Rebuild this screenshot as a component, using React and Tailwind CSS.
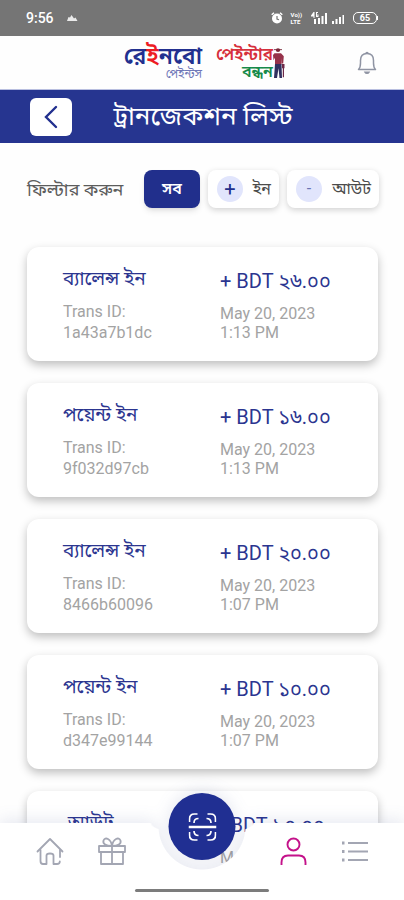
import React, { useState } from 'react';

const transactions = [
  { id: '1a43a7b1dc', title: 'ব্যালেন্স ইন', amount: '+ BDT ২৬.০০', date: 'May 20, 2023', time: '1:13 PM' },
  { id: '9f032d97cb', title: 'পয়েন্ট ইন', amount: '+ BDT ১৬.০০', date: 'May 20, 2023', time: '1:13 PM' },
  { id: '8466b60096', title: 'ব্যালেন্স ইন', amount: '+ BDT ২০.০০', date: 'May 20, 2023', time: '1:07 PM' },
  { id: 'd347e99144', title: 'পয়েন্ট ইন', amount: '+ BDT ১০.০০', date: 'May 20, 2023', time: '1:07 PM' },
  { id: '', title: '\u00a0আউট', amount: '- BDT ১০.০০', date: 'May 20, 2023', time: '' },
];

const StatusBar = () => (
  <div className="flex h-9 shrink-0 items-center justify-between bg-[#757575] pr-[26px] pl-[26px] text-white">
    <div className="flex items-center gap-3">
      <span className="text-[14px] font-medium">9:56</span>
      <svg className="h-2 w-3" viewBox="0 0 12 8" fill="currentColor">
        <path d="M1 7h10.500L9.500 3.500 8 4.500 5.500 1 4 3.500 2.500 3z" opacity=".85" />
      </svg>
    </div>
    <div className="flex items-center gap-2">
      <svg className="h-3 w-3" viewBox="0 0 12 12">
        <circle cx="6" cy="6.500" r="5" fill="#fff" />
        <path d="M.7 2.800L3 .8M11.300 2.800L9 .8" stroke="#fff" strokeWidth="1.500" />
        <path d="M6 4v3l2 .8" stroke="#757575" strokeWidth="1.200" fill="none" />
      </svg>
      <div className="flex flex-col text-[6px] leading-[7px] font-bold">
        <span>Vo))</span>
        <span>LTE</span>
      </div>
      <svg className="h-3 w-[35px]" viewBox="0 0 35 12" fill="#fff">
        <path d="M3.500 0L1 3.500v1h2.500V6h1V0zM8 0H6v5h2.500V2.500H7.200v1h.4V4H7V1h1z" />
        <path d="M4 7h2v5H4zM8 6h2v6H8zM11.500 4h2v8h-2zM15 1h2v11h-2zM22 9h2v3h-2zM25.500 7h2v5h-2zM29 5h2v7h-2zM32.500 3h1.500v9h-1.500z" />
      </svg>
      <div className="flex items-center">
        <span className="flex h-3 w-6 items-center justify-center rounded-[5px] border border-white text-[9px] leading-none font-bold">65</span>
        <span className="h-1 w-px bg-white" />
      </div>
    </div>
  </div>
);

const PainterFigure = () => (
  <svg className="h-8 w-3" viewBox="0 0 12 36" preserveAspectRatio="none">
    <circle cx="5" cy="3.500" r="2.200" fill="#7a2a3a" />
    <path d="M1 2.500h8v1H1z" fill="#7a2a3a" />
    <path d="M1.500 7h6.500l2.800 3.500-.6 8H8.800l-.3-6V20H2V12L.5 15 0 9z" fill="#96324a" />
    <path d="M2 19h6.500l.5 16H6.500L5.500 24 4 35H1z" fill="#31305f" />
    <path d="M9 19h2.500v5H11v10H9.800V24H9z" fill="#6d2948" />
  </svg>
);

const Header = () => (
  <header className="flex h-[54px] shrink-0 items-center border-b border-[#b9bfe0] px-[25px]">
    <div className="w-[97px]" />
    <div className="flex flex-1 items-center gap-[14px]">
      <div className="flex w-20 flex-col items-end">
        <span className="text-[23px] leading-[23px] font-semibold whitespace-nowrap text-[#22308f]">
          রে<span className="text-[#ed1c24]">ই</span>নবো
        </span>
        <span className="text-[12px] leading-[13px] text-[#6f78b8]">পেইন্টস</span>
      </div>
      <div className="flex items-center">
        <div className="flex flex-col items-end">
          <span className="text-[17px] leading-[18px] font-semibold whitespace-nowrap text-[#d6303c]">পেইন্টার</span>
          <span className="text-[16px] leading-[17px] font-semibold text-[#168a4a]">বন্ধন</span>
        </div>
        <PainterFigure />
      </div>
    </div>
    <button type="button" aria-label="Notifications" className="text-[#8f94a3]">
      <svg className="h-6 w-6" viewBox="0 0 24 24" fill="none" stroke="currentColor" strokeWidth="1.500">
        <path d="M3.500 18.500c1.700-1.600 2-3.300 2-6.500V9.500C5.500 5.500 7.500 2.500 12 2.500s6.500 3 6.500 7V12c0 3.200.3 4.900 2 6.500z" strokeLinejoin="round" />
        <path d="M11 2.500c0-1.300 2-1.300 2 0" />
        <path d="M10 21.200c.8 1.500 3.200 1.500 4 0z" fill="currentColor" />
      </svg>
    </button>
  </header>
);

const TitleBar = () => (
  <div className="flex h-[53px] shrink-0 items-center bg-[#263590] px-[30px]">
    <button type="button" aria-label="Back" className="flex h-[38px] w-[42px] items-center justify-center rounded-md bg-white text-[#22308f]">
      <svg className="h-6 w-4" viewBox="0 0 16 24" fill="none" stroke="currentColor" strokeWidth="2.400">
        <path d="M13 2L3 12l10 10" strokeLinecap="round" />
      </svg>
    </button>
    <h1 className="flex-1 text-center text-[26px] whitespace-nowrap text-white">ট্রানজেকশন লিস্ট</h1>
    <div className="w-[40px]" />
  </div>
);

const Filters = () => {
  const [active, setActive] = useState('all');

  return (
    <div className="flex items-center pr-[25px] pl-[27px] pt-[27px]">
      <span className="flex-1 text-[18px] whitespace-nowrap text-[#5c5c5c]">ফিল্টার করুন</span>
      <div className="flex gap-2">
        <button
          type="button"
          aria-pressed={active === 'all'}
          onClick={() => setActive('all')}
          className="h-[38px] w-[56px] rounded-lg bg-[#212f8c] text-[16px] font-semibold text-white shadow-md"
        >
          সব
        </button>
        <button
          type="button"
          aria-pressed={active === 'in'}
          onClick={() => setActive('in')}
          className="flex h-[38px] w-[71px] items-center justify-between rounded-lg bg-white pr-2 pl-[9px] text-[16px] text-[#4b4b4b] shadow-[0_2px_6px_rgba(0,0,0,0.18)]"
        >
          <span className="flex h-[26px] w-[26px] items-center justify-center rounded-full bg-[#e1e5fc] text-[20px] leading-none text-[#212f8c]">+</span>
          ইন
        </button>
        <button
          type="button"
          aria-pressed={active === 'out'}
          onClick={() => setActive('out')}
          className="flex h-[38px] w-[92px] items-center justify-between rounded-lg bg-white pr-2 pl-[9px] text-[16px] text-[#4b4b4b] shadow-[0_2px_6px_rgba(0,0,0,0.18)]"
        >
          <span className="flex h-[26px] w-[26px] items-center justify-center rounded-full bg-[#e1e5fc] text-[16px] leading-none text-[#6a74b4]">-</span>
          আউট
        </button>
      </div>
    </div>
  );
};

const TransactionCard = ({ item }) => (
  <li className="grid h-[114px] shrink-0 grid-cols-[157px_1fr] rounded-xl bg-white pt-5 pl-9 shadow-[0_4px_10px_rgba(0,0,0,0.25)]">
    <div>
      <h2 className="text-[19px] leading-6 whitespace-nowrap text-[#2b3590]">{item.title}</h2>
      <p className="mt-[10px] text-[16px] leading-[21px] text-[#a3a3a3]">
        Trans ID:
        <br />
        {item.id}
      </p>
    </div>
    <div>
      <p className="pt-[2px] text-[20px] leading-6 whitespace-nowrap text-[#2b3590]">{item.amount}</p>
      <p className="mt-[11px] text-[16px] leading-[19px] text-[#a3a3a3]">
        {item.date}
        <br />
        {item.time}
      </p>
    </div>
  </li>
);

const BottomNav = () => (
  <nav className="absolute inset-x-0 bottom-0 h-[77px] drop-shadow-[0_-3px_8px_rgba(60,70,140,0.12)]">
    {/* white bar with the round cut-out under the scan button, flared at the top edge */}
    <div className="flex h-full flex-col bg-white [mask-composite:intersect] [mask-image:radial-gradient(circle_at_50%_3px,transparent_43px,black_44px),radial-gradient(52px_12px_at_50%_0,transparent_96%,black_100%)]">
      <div className="grid flex-1 grid-cols-[100px_24px_1fr_124px] px-0 pt-[14px] text-[#a3a6b3]">
        <a href="#home" aria-label="Home" className="flex justify-center">
          <svg className="h-7 w-7" viewBox="0 0 28 28" fill="none" stroke="currentColor" strokeWidth="1.800" strokeLinecap="round" strokeLinejoin="round">
            <path d="M1.500 14.500L14 2l12.500 12.500" />
            <path d="M4.500 13v11c0 2 .8 3 2.500 3h3.500v-8.500c0-1.500.8-2 3.500-2s3.500.5 3.500 2V27H21c1.500 0 2.800-.8 2.800-2.500M24 13v7" />
          </svg>
        </a>
        <a href="#gifts" aria-label="Gifts" className="flex justify-center">
          <svg className="h-7 w-7 shrink-0" viewBox="0 0 28 28" fill="none" stroke="currentColor" strokeWidth="1.800" strokeLinejoin="round">
            <path d="M1 9h26v6H1zM3 15h22v12H3zM14 9v18" />
            <path d="M14 9C8 9 4.500 7 5.500 3.500 7-.5 13 1.500 14 9zM14 9c6 0 9.500-2 8.500-5.500C21-.5 15 1.500 14 9z" />
          </svg>
        </a>
        <span />
        <div className="flex items-start gap-[33px]">
          <a href="#profile" aria-label="Profile" className="text-[#c4128a]">
            <svg className="h-7 w-7" viewBox="0 0 28 28" fill="none" stroke="currentColor" strokeWidth="1.900">
              <circle cx="13.500" cy="7.500" r="6" />
              <path d="M1.500 28v-2.500c0-5 2-7 6.500-7h11c4.500 0 6.500 2 6.500 7V28" />
            </svg>
          </a>
          <a href="#menu" aria-label="Menu">
            <svg className="h-7 w-7" viewBox="0 0 28 28" fill="none" stroke="currentColor" strokeWidth="2.200">
              <path d="M7 6h20M7 14.500h20M7 23h20" />
              <path d="M1 6h2.500M1 14.500h2.500M1 23h2.500" strokeWidth="2.800" />
            </svg>
          </a>
        </div>
      </div>
      <div className="mx-auto mb-2 h-[3px] w-[134px] rounded-full bg-[#7c7c7c]" />
    </div>
    <button
      type="button"
      aria-label="Scan"
      className="absolute -top-[30px] left-1/2 flex h-[67px] w-[67px] -translate-x-1/2 items-center justify-center rounded-full bg-[#202f92] text-white"
    >
      <svg className="h-7 w-7" viewBox="0 0 28 28" fill="none" stroke="currentColor" strokeWidth="1.700">
        <path d="M1 9V6c0-3 1.500-5 5-5h3M19 1h3c3.500 0 5 2 5 5v3M1 19v3c0 3 1.500 5 5 5h3M19 27h3c3.500 0 5-2 5-5v-3" />
        <path d="M5.500 10c0-3 1-4.500 4.500-4.500M18 5.500c3.500 0 4.500 1.500 4.500 4.500M5.500 18c0 3 1 4.500 4.500 4.500M18 22.500c3.500 0 4.500-1.500 4.500-4.500" />
        <path d="M0 14h28" strokeWidth="2.400" />
      </svg>
    </button>
  </nav>
);

const App = () => (
  <div className="relative flex h-screen flex-col overflow-hidden bg-[#fefefe] font-[Roboto,'Noto_Sans_Bengali','Noto_Sans',sans-serif]">
    <StatusBar />
    <Header />
    <TitleBar />
    <main className="min-h-0 flex-1 overflow-hidden">
      <Filters />
      <ul className="mr-[26px] ml-[27px] mt-[39px] flex flex-col gap-[22px]">
        {transactions.map((item, i) => (
          <TransactionCard key={i} item={item} />
        ))}
      </ul>
    </main>
    <BottomNav />
  </div>
);

export default App;
